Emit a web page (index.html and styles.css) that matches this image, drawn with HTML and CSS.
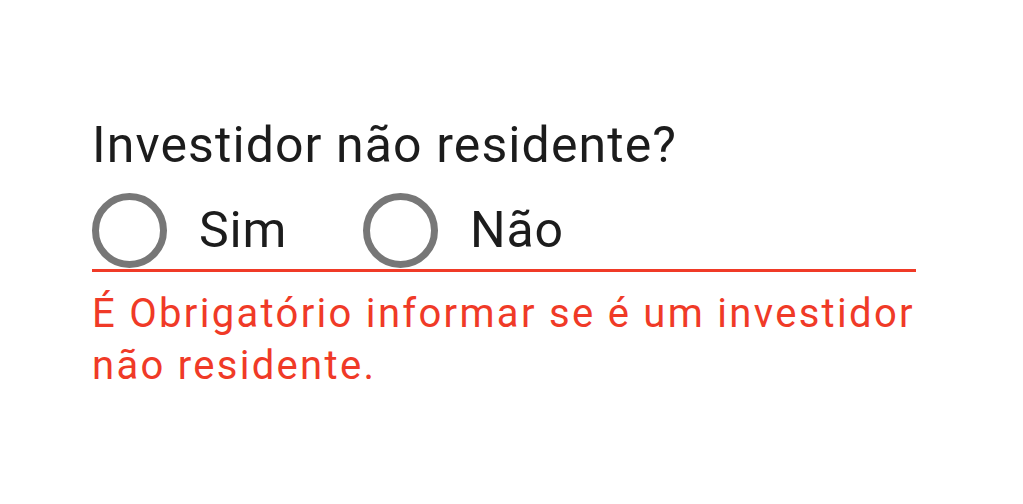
FILE: index.html
```html
<!DOCTYPE html>
<html lang="pt">
<head>
<meta charset="utf-8">
<link rel="stylesheet" href="styles.css">
</head>
<body>
<div class="field">
  <div class="field-label">Investidor não residente?</div>
  <div class="options">
    <label class="option">
      <span class="radio"></span>
      <span class="option-text">Sim</span>
    </label>
    <label class="option">
      <span class="radio"></span>
      <span class="option-text">Não</span>
    </label>
  </div>
  <div class="error">É Obrigatório informar se é um investidor não residente.</div>
</div>
</body>
</html>
```
FILE: styles.css
```css
html, body {
  margin: 0;
  padding: 0;
  background: #ffffff;
}
body {
  font-family: Roboto, "Noto Sans", sans-serif;
}
.field {
  margin-left: 92px;
  width: 824px;
  padding-top: 115px;
}
.field-label {
  font-size: 50px;
  line-height: 60px;
  letter-spacing: 1.1px;
  color: #1c1c1c;
}
.options {
  display: flex;
  align-items: center;
  height: 78px;
  margin-top: 16px;
  border-bottom: 3px solid #f03a27;
}
.option {
  display: flex;
  align-items: center;
  margin-right: 76px;
}
.radio {
  box-sizing: border-box;
  width: 75px;
  height: 75px;
  border: 7px solid #777777;
  border-radius: 50%;
}
.option-text {
  margin-left: 32px;
  font-size: 50px;
  letter-spacing: 0.8px;
  color: #1c1c1c;
}
.error {
  margin-top: 16px;
  font-size: 40px;
  line-height: 52px;
  letter-spacing: 2.3px;
  color: #f03a27;
}
```
